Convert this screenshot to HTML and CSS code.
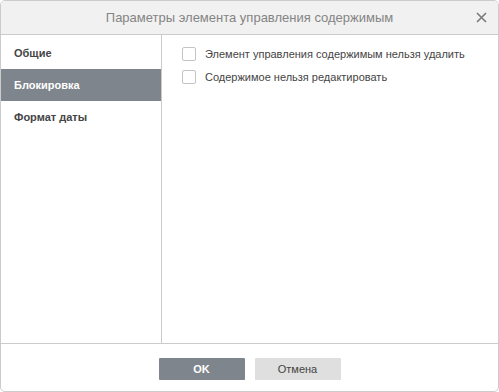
FILE: index.html
```html
<!DOCTYPE html>
<html lang="ru">

<head>
  <meta charset="UTF-8">
  <meta name="viewport" content="width=device-width, initial-scale=1.0">
  <title>Параметры элемента управления содержимым</title>
  <link rel="stylesheet" href="styles.css">
</head>

<body>
  <div class="dialog">
    <div class="dialog-header">
      <span class="dialog-title">Параметры элемента управления содержимым</span>
      <span class="dialog-close">
        <svg width="11" height="11" viewBox="0 0 11 11">
          <path d="M1 1 L10 10 M10 1 L1 10" stroke="#7a7a7a" stroke-width="1.6" fill="none" />
        </svg>
      </span>
    </div>
    <div class="dialog-body">
      <ul class="side-menu">
        <li class="side-item">Общие</li>
        <li class="side-item active">Блокировка</li>
        <li class="side-item">Формат даты</li>
      </ul>
      <div class="panel">
        <label class="check-row">
          <span class="check-box"></span>
          Элемент управления содержимым нельзя удалить
        </label>
        <label class="check-row">
          <span class="check-box"></span>
          Содержимое нельзя редактировать
        </label>
      </div>
    </div>
    <div class="dialog-footer">
      <button class="btn btn-primary">OK</button>
      <button class="btn">Отмена</button>
    </div>
  </div>
</body>

</html>
```

FILE: styles.css
```css
body {
  margin: 0;
  font-family: "Liberation Sans", Arial, sans-serif;
  font-size: 11px;
  color: #444;
  background: #fff;
}

.dialog {
  width: 499px;
  height: 392px;
  box-sizing: border-box;
  border: 1px solid #cbcbcb;
  border-radius: 5px;
  overflow: hidden;
  display: flex;
  flex-direction: column;
}

.dialog-header {
  height: 33px;
  flex: none;
  background-color: #f1f1f1;
  border-bottom: 1px solid #cbcbcb;
  display: flex;
  align-items: center;
  justify-content: center;
  position: relative;
}

.dialog-title {
  font-size: 13px;
  color: #848484;
}

.dialog-close {
  position: absolute;
  right: 11px;
  top: 11px;
  width: 11px;
  height: 11px;
  display: flex;
}

.dialog-body {
  flex: 1;
  display: flex;
}

.side-menu {
  list-style: none;
  margin: 0;
  padding: 2px 0 0;
  width: 160px;
  border-right: 1px solid #cbcbcb;
}

.side-item {
  height: 32px;
  line-height: 32px;
  padding-left: 13px;
  font-weight: bold;
}

.side-item.active {
  background-color: #7e858c;
  color: #fff;
}

.panel {
  flex: 1;
  padding: 12px 0 0 20px;
  display: flex;
  flex-direction: column;
  gap: 9px;
}

.check-row {
  display: flex;
  align-items: center;
  gap: 9px;
  height: 14px;
}

.check-box {
  width: 12px;
  height: 12px;
  border: 1px solid #c4c4c4;
  border-radius: 2px;
  background: #fff;
}

.dialog-footer {
  height: 48px;
  flex: none;
  border-top: 1px solid #cbcbcb;
  display: flex;
  justify-content: center;
  align-items: flex-start;
  gap: 10px;
  padding-top: 14px;
  box-sizing: border-box;
}

.btn {
  width: 86px;
  height: 22px;
  border: none;
  border-radius: 1px;
  background-color: #dfdfdf;
  color: #444;
  font-family: inherit;
  font-size: 11px;
  padding: 0;
}

.btn-primary {
  background-color: #7e858c;
  color: #fff;
  font-weight: bold;
}
```
